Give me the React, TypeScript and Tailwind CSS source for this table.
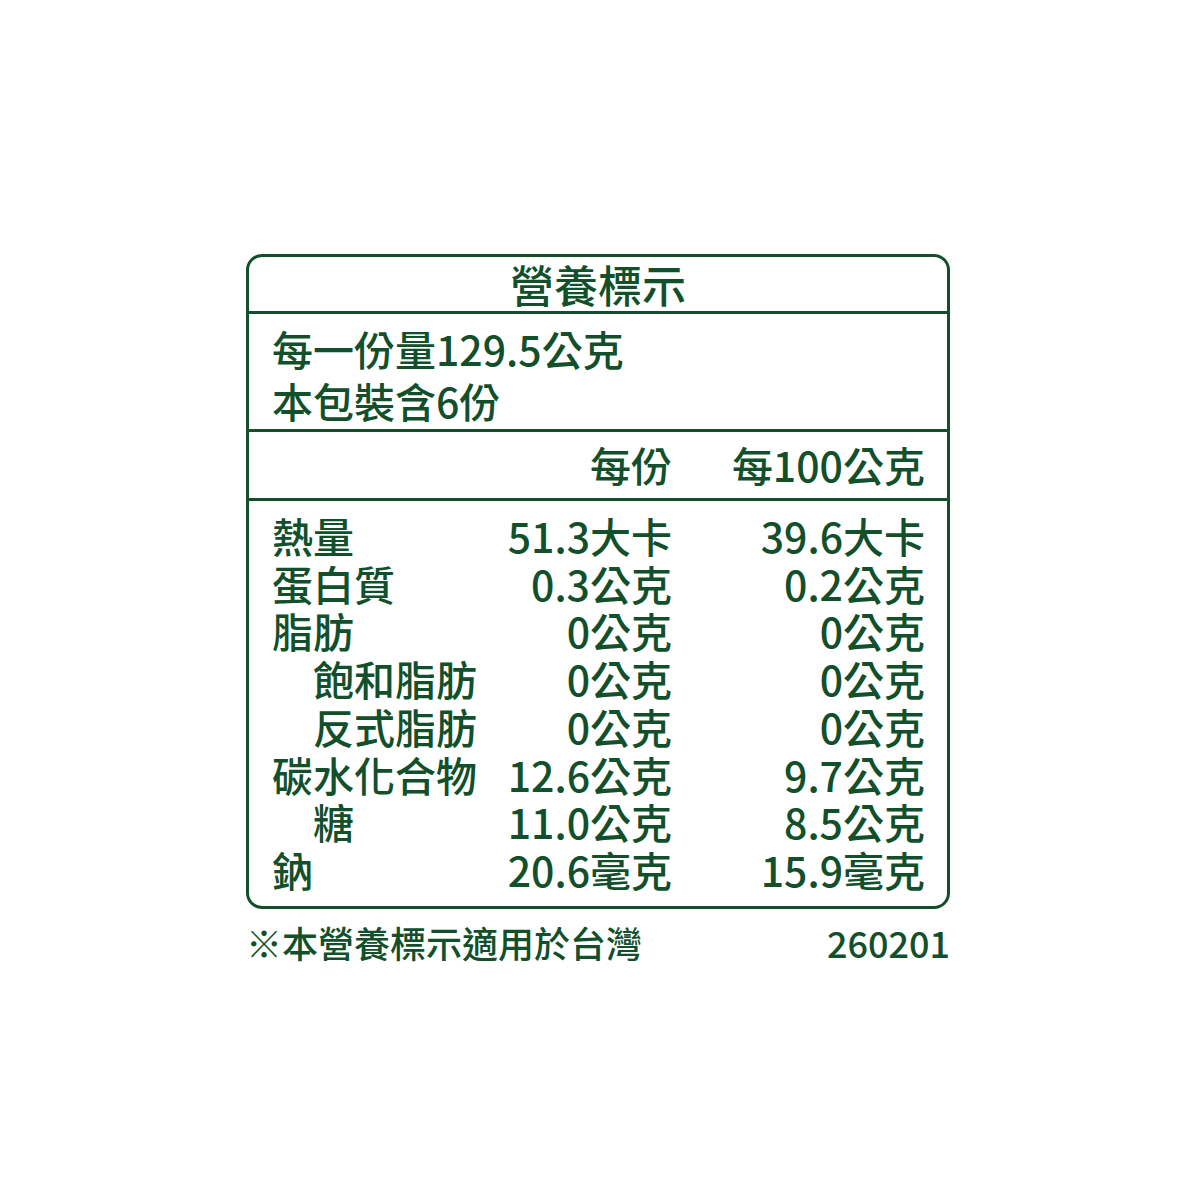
import React from "react";

const rows: { name: string; a: string; b: string; indent?: boolean }[] = [
  { name: "熱量", a: "51.3大卡", b: "39.6大卡" },
  { name: "蛋白質", a: "0.3公克", b: "0.2公克" },
  { name: "脂肪", a: "0公克", b: "0公克" },
  { name: "飽和脂肪", a: "0公克", b: "0公克", indent: true },
  { name: "反式脂肪", a: "0公克", b: "0公克", indent: true },
  { name: "碳水化合物", a: "12.6公克", b: "9.7公克" },
  { name: "糖", a: "11.0公克", b: "8.5公克", indent: true },
  { name: "鈉", a: "20.6毫克", b: "15.9毫克" },
];

export default function App() {
  return (
    <div
      className="w-[1200px] h-[1200px] bg-white pt-[254px] pl-[246px] text-[#124f2b] font-medium"
      style={{ fontFamily: '"Noto Sans CJK TC", "Noto Sans", sans-serif' }}
    >
      <div className="w-[704px] border-[3px] border-[#134f2c] rounded-[16px]">
        <div className="h-[57px] flex items-center justify-center text-[44px] leading-[57px] border-b-[3px] border-[#134f2c]">
          營養標示
        </div>
        <div className="h-[118px] pt-[8px] pl-[23px] text-[41px] leading-[52px] border-b-[3px] border-[#134f2c]">
          <div>每一份量129.5公克</div>
          <div>本包裝含6份</div>
        </div>
        <div className="h-[69px] flex items-center pl-[23px] pr-[22px] text-[41px] border-b-[3px] border-[#134f2c]">
          <div className="flex-1" />
          <div className="w-[190px] text-right">每份</div>
          <div className="w-[253px] text-right">每100公克</div>
        </div>
        <div className="pt-[11px] pb-[12px] pl-[23px] pr-[22px] text-[41px] leading-[47.7px]">
          {rows.map((r) => (
            <div key={r.name} className="flex">
              <div className={"flex-1 whitespace-nowrap " + (r.indent ? "pl-[41px]" : "")}>{r.name}</div>
              <div className="w-[190px] text-right whitespace-nowrap">{r.a}</div>
              <div className="w-[253px] text-right whitespace-nowrap">{r.b}</div>
            </div>
          ))}
        </div>
      </div>
      <div className="w-[704px] mt-[13px] flex justify-between text-[36px] leading-[40px]">
        <div>※本營養標示適用於台灣</div>
        <div>260201</div>
      </div>
    </div>
  );
}
